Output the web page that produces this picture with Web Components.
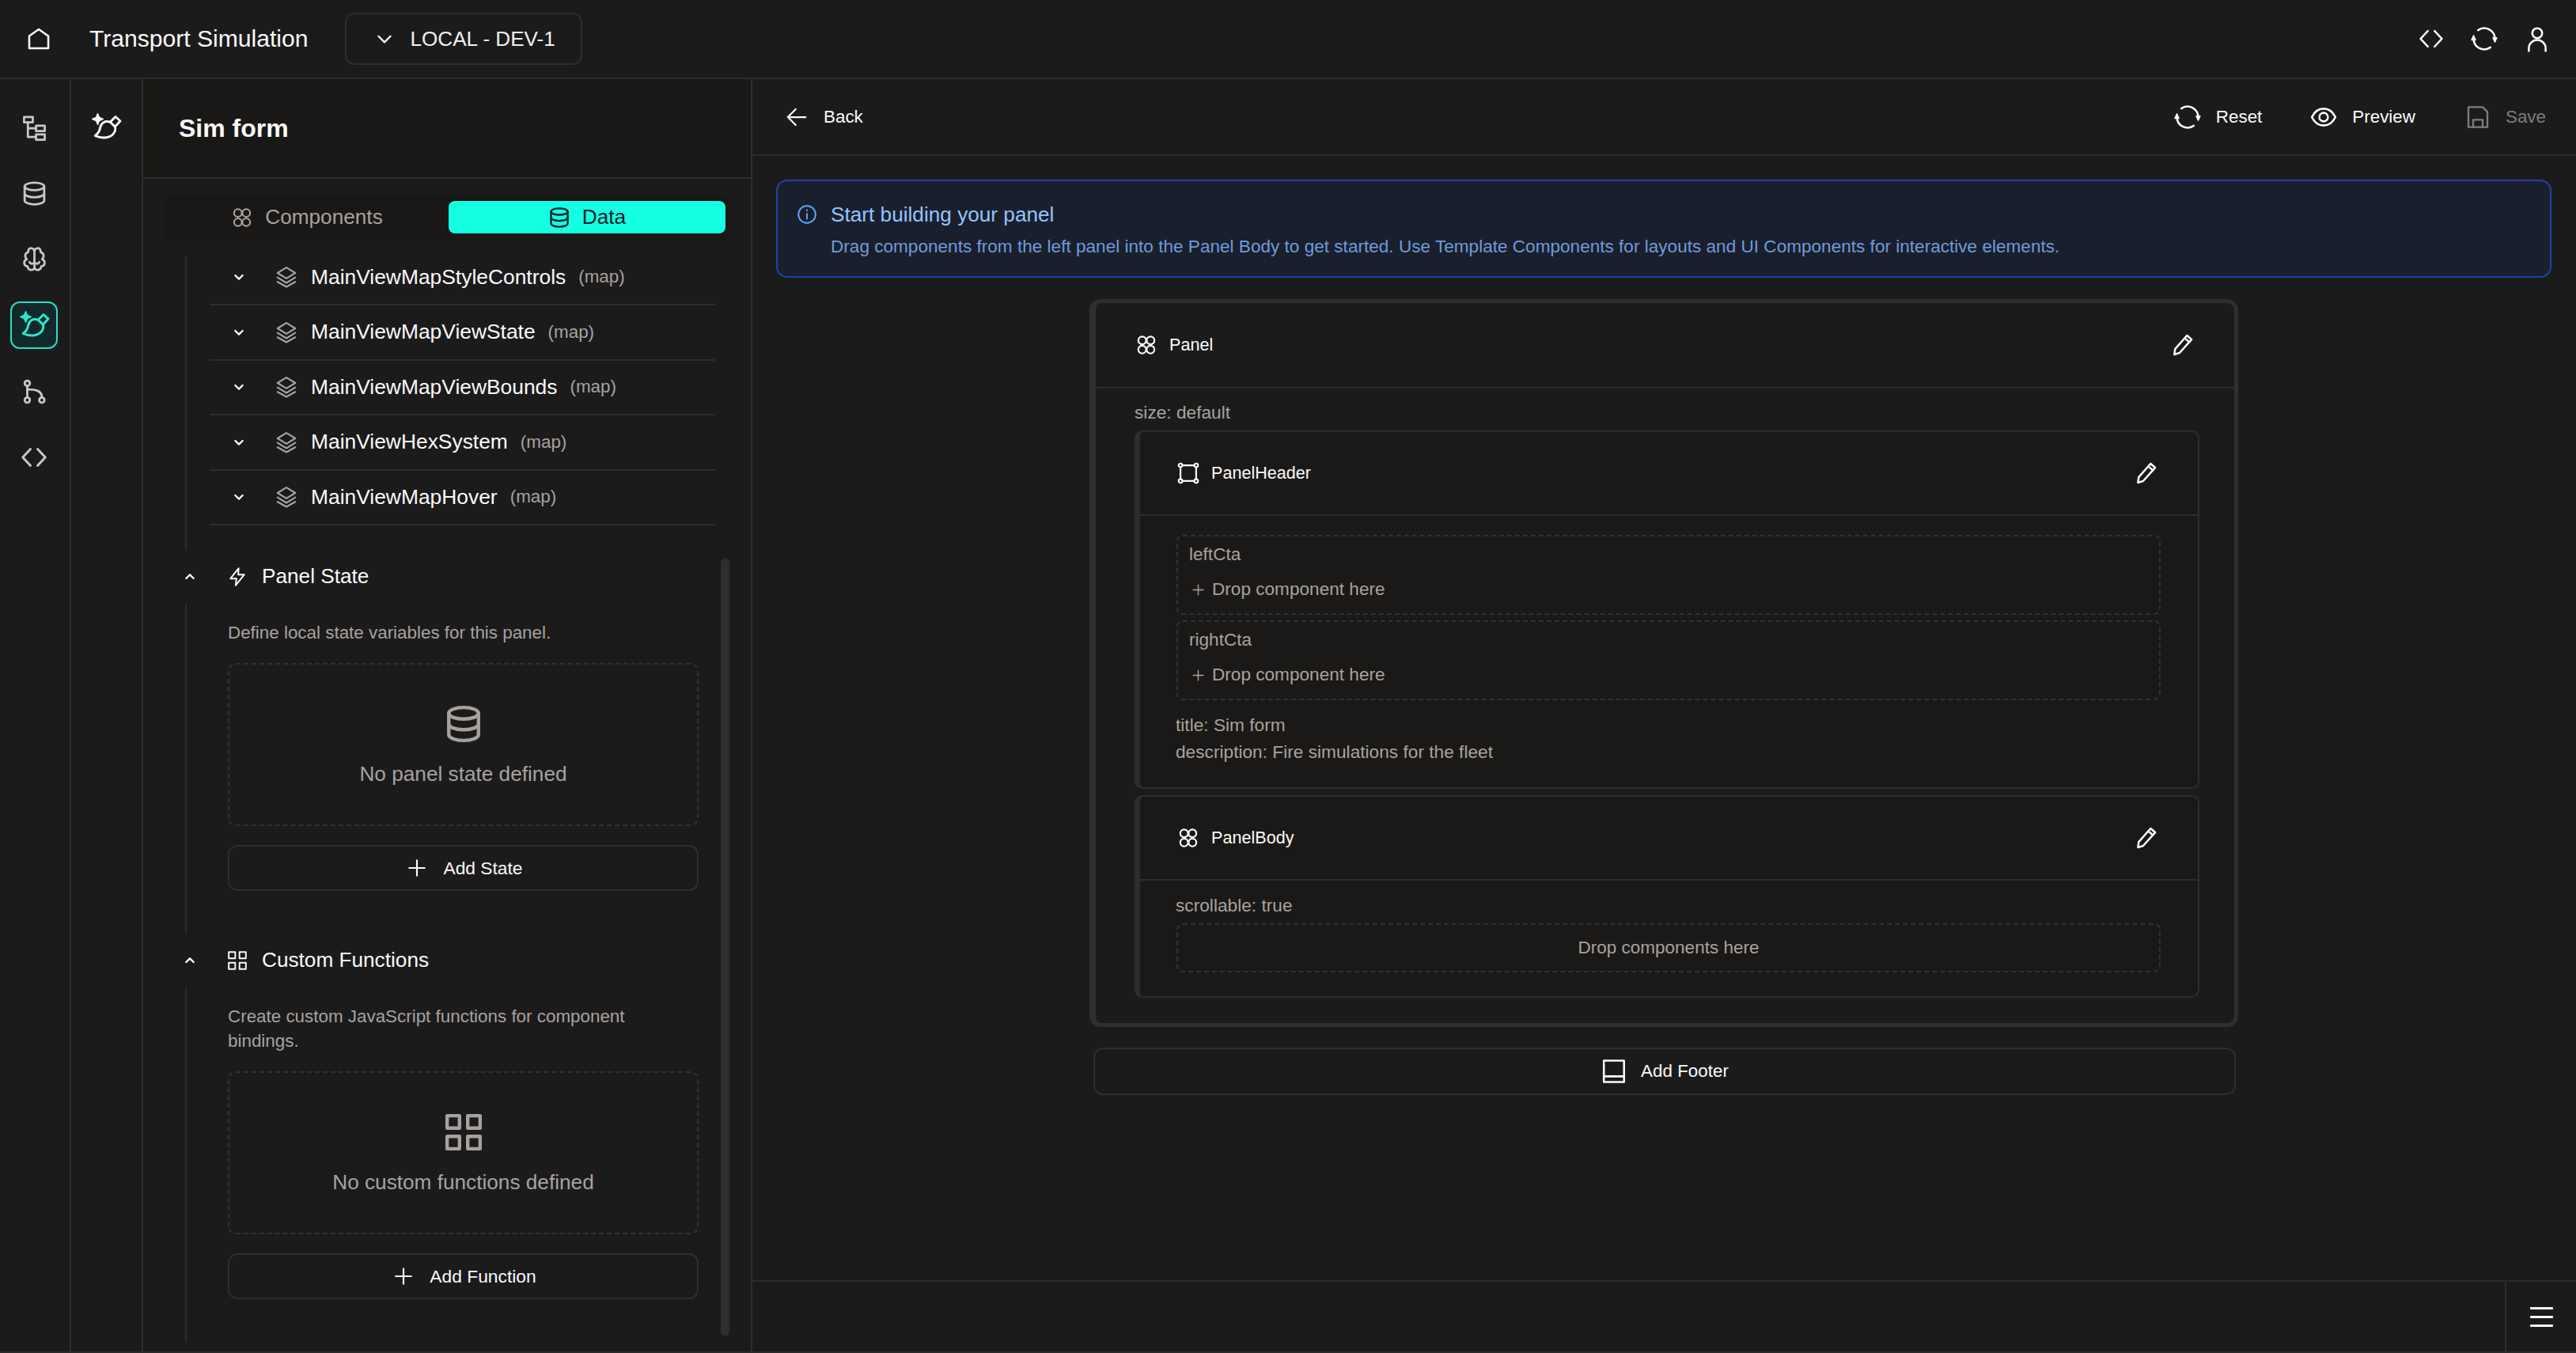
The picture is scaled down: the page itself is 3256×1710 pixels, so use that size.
<!DOCTYPE html>
<html lang="en">
<head>
<meta charset="utf-8">
<title>Transport Simulation</title>
<style>
  html, body { margin: 0; height: 100%; background: #1c1b1c; overflow: hidden; }
  body { font-family: "Liberation Sans", Arial, sans-serif; color: #fafafa; }
</style>
</head>
<body>
<app-shell>
  <nav-rail slot="rail"></nav-rail>
  <sub-rail slot="subrail"></sub-rail>

  <side-panel slot="panel" heading="Sim form">
    <tree-list>
      <tree-row name="MainViewMapStyleControls" kind="(map)"></tree-row>
      <tree-row name="MainViewMapViewState" kind="(map)"></tree-row>
      <tree-row name="MainViewMapViewBounds" kind="(map)"></tree-row>
      <tree-row name="MainViewHexSystem" kind="(map)"></tree-row>
      <tree-row name="MainViewMapHover" kind="(map)"></tree-row>
    </tree-list>
    <data-section label="Panel State" icon="bolt"
      desc="Define local state variables for this panel."
      empty="No panel state defined" empty-icon="db" action="Add State"></data-section>
    <data-section label="Custom Functions" icon="grid"
      desc="Create custom JavaScript functions for component bindings."
      empty="No custom functions defined" empty-icon="grid" action="Add Function"></data-section>
  </side-panel>

  <builder-view slot="main">
    <comp-card label="Panel" icon="circles" level="outer">
      <prop-line slot="props">size: default</prop-line>
      <comp-card label="PanelHeader" icon="corners" level="inner">
        <drop-slot label="leftCta"></drop-slot>
        <drop-slot label="rightCta"></drop-slot>
        <prop-line class="first">title: Sim form</prop-line>
        <prop-line>description: Fire simulations for the fleet</prop-line>
      </comp-card>
      <comp-card label="PanelBody" icon="circles" level="inner">
        <prop-line class="top">scrollable: true</prop-line>
        <drop-area>Drop components here</drop-area>
      </comp-card>
    </comp-card>
  </builder-view>
</app-shell>

<script>
const ICONS = {
  home: '<path d="M3.500 20.500V9.500L12 3.500l8.500 6v11z"/>',
  chevronDown: '<path d="M5 9l7 7 7-7"/>',
  chevronUp: '<path d="M5 15l7-7 7 7"/>',
  code: '<path d="M9 5l-6.500 7L9 19"/><path d="M15 5l6.500 7L15 19"/>',
  sync: '<path d="M6.500 4.300A9.500 9.500 0 0 1 21.500 12"/><path d="M17.500 19.700A9.500 9.500 0 0 1 2.500 12"/><path d="M19.700 11h3.600L21.500 15z" fill="currentColor" stroke-width="1"/><path d="M.7 13h3.600L2.500 9z" fill="currentColor" stroke-width="1"/>',
  user: '<circle cx="12" cy="7" r="4.400"/><path d="M4.500 23v-2.500a7.500 7.500 0 0 1 15 0V23"/>',
  tree: '<rect x="2.500" y="2" width="8" height="5"/><rect x="13.500" y="10" width="8" height="5"/><rect x="13.500" y="18" width="8" height="5"/><path d="M6 7v13.500h7.500M6 12.500h7.500"/>',
  db: '<ellipse cx="12" cy="5.500" rx="9" ry="3.500"/><path d="M3 5.500v13c0 1.900 4 3.500 9 3.500s9-1.600 9-3.500v-13"/><path d="M3 12c0 1.900 4 3.500 9 3.500s9-1.600 9-3.500"/>',
  brain: '<path d="M12 4.500C11.500 1.500 7.300 1 6.400 4c-.2.500-.2 1-.1 1.500C3.300 6.200 2.600 9.800 5 12 1.700 13.300 1.800 18.200 5.800 18.700 6 22.300 10.500 23.200 12 20c1.500 3.200 6 2.300 6.200-1.300 4-.5 4.100-5.400.8-6.700 2.400-2.200 1.700-5.800-1.300-6.500.1-.5.1-1-.1-1.500C16.700 1 12.500 1.500 12 4.500z"/><path d="M12 4.500V20"/><path d="M12 15c-1.500 1.800-3.500 1.500-4.500-.3"/><path d="M12 15c1.500 1.800 3.500 1.500 4.500-.3"/>',
  planet: '<path d="M5 .5l1.300 3.200L9.500 5 6.300 6.300 5 9.500 3.700 6.300.5 5l3.200-1.300z" fill="currentColor" stroke-width="1"/><path d="M15.500 7.500L20 3l4 3.700-4.400 4.700"/><path d="M15.500 7.500l4.100 3.900"/><path d="M15.500 7.500C11 6 7.800 8.300 7 12.500c-.4 2.800-2 5-4.200 6.500 4 2 12 3 15.500-1.700 1.800-2.300 1.800-4 1.300-5.900"/>',
  circles: '<circle cx="7.500" cy="7" r="4.200"/><circle cx="16.500" cy="7" r="4.200"/><circle cx="7.500" cy="17" r="4.200"/><circle cx="16.500" cy="17" r="4.200"/>',
  layers: '<path d="M12 2.500L21 8l-9 5.500L3 8z"/><path d="M3 12.500l9 5.500 9-5.500"/><path d="M3 17l9 5 9-5"/>',
  bolt: '<path d="M13.500 2L4 14h7l-1 8 10-12.500h-7z"/>',
  grid: '<rect x="2" y="2" width="7.500" height="7.500"/><rect x="14.500" y="2" width="7.500" height="7.500"/><rect x="2" y="14.500" width="7.500" height="7.500"/><rect x="14.500" y="14.500" width="7.500" height="7.500"/>',
  plus: '<path d="M12 3v18M3 12h18"/>',
  arrowLeft: '<path d="M21 12H4"/><path d="M11 4l-8 8 8 8"/>',
  eye: '<path d="M1.500 12C4 6.800 7.600 4.500 12 4.500s8 2.300 10.500 7.500C20 17.200 16.400 19.500 12 19.500S4 17.200 1.500 12z"/><circle cx="12" cy="12" r="3.800"/>',
  save: '<path d="M3 2.500h13.500L21 7v14.500H3z"/><path d="M7.500 21.500v-7h9v7"/>',
  info: '<circle cx="12" cy="12" r="10"/><path d="M12 11v6"/><path d="M12 7v.5"/>',
  corners: '<path d="M5.500 3.500h13M20.500 5.500v13M18.500 20.500h-13M3.500 18.500v-13"/><circle cx="3.500" cy="3.500" r="2"/><circle cx="20.500" cy="3.500" r="2"/><circle cx="3.500" cy="20.500" r="2"/><circle cx="20.500" cy="20.500" r="2"/>',
  pencil: '<path d="M4 21l.7-5.200L16 3l4.300 3.800L8.900 19.500z"/><path d="M13.800 5.500l4.300 3.800"/>',
  footer: '<rect x="3" y="2.500" width="18" height="19"/><path d="M3 16.500h18"/>'
};

class UiIcon extends HTMLElement {
  connectedCallback() {
    const size = this.getAttribute('size') || 32;
    const stroke = this.getAttribute('stroke') || 1.8;
    this.attachShadow({ mode: 'open' });
    this.shadowRoot.innerHTML = `
      <style>
        :host { display: inline-flex; flex: none; width: ${size}px; height: ${size}px; }
        svg { width: 100%; height: 100%; overflow: visible; fill: none; stroke: currentColor; stroke-width: ${stroke}; stroke-linecap: round; stroke-linejoin: round; }
      </style>
      <svg viewBox="0 0 24 24">${ICONS[this.getAttribute('name')] || ''}</svg>`;
  }
}
customElements.define('ui-icon', UiIcon);

class AppShell extends HTMLElement {
  constructor() {
    super();
    this.attachShadow({ mode: 'open' });
    this.shadowRoot.innerHTML = `
      <style>
        :host { display: flex; flex-direction: column; width: 100vw; height: 100vh; box-sizing: border-box; border-bottom: 2px solid #2b2b2b; background: #1c1b1c; overflow: hidden; }
        header { flex: none; height: 100px; box-sizing: border-box; border-bottom: 2px solid #2d2d2d; display: flex; align-items: center; padding: 0 32px; }
        .title { margin-left: 47px; font-size: 30.100px; }
        .env { margin-left: 46px; width: 300px; height: 66px; box-sizing: border-box; border: 2px solid #2f2e2e; border-radius: 12px; display: flex; align-items: center; gap: 20px; padding-left: 35px; font-size: 26.100px; color: #f0f0f0; }
        .right { margin-left: auto; display: flex; gap: 33px; }
        .body { flex: 1; min-height: 0; display: flex; }
      </style>
      <header>
        <ui-icon name="home" size="34" stroke="1.800"></ui-icon>
        <span class="title">Transport Simulation</span>
        <div class="env"><ui-icon name="chevronDown" size="26" stroke="2.200"></ui-icon>LOCAL - DEV-1</div>
        <div class="right">
          <ui-icon name="code" size="34"></ui-icon>
          <ui-icon name="sync" size="34"></ui-icon>
          <ui-icon name="user" size="34"></ui-icon>
        </div>
      </header>
      <div class="body">
        <slot name="rail"></slot>
        <slot name="subrail"></slot>
        <slot name="panel"></slot>
        <slot name="main"></slot>
      </div>`;
  }
}
customElements.define('app-shell', AppShell);

class NavRail extends HTMLElement {
  constructor() {
    super();
    this.attachShadow({ mode: 'open' });
    const items = ['tree', 'db', 'brain', 'planet', 'branch', 'code'];
    this.shadowRoot.innerHTML = `
      <style>
        :host { display: flex; flex-direction: column; flex: none; align-items: center; gap: 23.400px; width: 90px; box-sizing: border-box; padding: 31px 2px 0 0; border-right: 2px solid #2d2d2d; color: #c9c7c5; }
        .item { width: 60px; height: 60px; box-sizing: border-box; display: flex; align-items: center; justify-content: center; border-radius: 12px; }
        .on { border: 2px solid #2bdcc6; background: #13282a; color: #2be6ce; }
        svg { width: 34px; height: 34px; fill: none; stroke: currentColor; stroke-width: 2; stroke-linecap: round; stroke-linejoin: round; }
      </style>
      ${items.map(n => n === 'branch'
        ? `<div class="item"><svg viewBox="0 0 24 24"><circle cx="6" cy="4.500" r="2.300"/><circle cx="6" cy="19.500" r="2.300"/><circle cx="19" cy="19.500" r="2.300"/><path d="M6 7v10"/><path d="M6 10c6 0 13 .5 13 7"/></svg></div>`
        : `<div class="item ${n === 'planet' ? 'on' : ''}"><ui-icon name="${n}" size="${n === 'planet' ? 36 : n === 'code' ? 36 : 33}" stroke="2"></ui-icon></div>`).join('')}`;
  }
}
customElements.define('nav-rail', NavRail);

class SubRail extends HTMLElement {
  constructor() {
    super();
    this.attachShadow({ mode: 'open' });
    this.shadowRoot.innerHTML = `
      <style>
        :host { display: flex; flex: none; justify-content: center; width: 91px; height: 100%; box-sizing: border-box; padding: 43px 2px 0 0; border-right: 2px solid #2d2d2d; }
      </style>
      <ui-icon name="planet" size="36" stroke="1.900"></ui-icon>`;
  }
}
customElements.define('sub-rail', SubRail);

class SidePanel extends HTMLElement {
  connectedCallback() {
    this.attachShadow({ mode: 'open' });
    this.shadowRoot.innerHTML = `
      <style>
        :host { display: block; position: relative; flex: none; width: 770px; height: 100%; box-sizing: border-box; border-right: 2px solid #2d2d2d; overflow: hidden; }
        .head { height: 126px; box-sizing: border-box; border-bottom: 2px solid #2d2d2d; background: #1a1816; display: flex; align-items: center; padding-left: 45px; font-size: 32px; font-weight: 700; }
        .tabs { margin: 19px 0 11.500px 27px; width: 713px; height: 60px; box-sizing: border-box; padding: 9px 4px 10px 9px; border-radius: 10px; background: #1a1816; display: grid; grid-template-columns: 1fr 1fr; }
        .tab { display: flex; align-items: center; justify-content: center; gap: 15px; font-size: 26.200px; color: #a8a29e; border-radius: 8px; }
        .tab.first { padding-right: 8px; }
        .tab.on { background: #15ffe2; color: #10212a; }
        .bar { position: absolute; left: 730px; top: 606px; width: 11px; height: 982px; border-radius: 6px; background: #2d2f2f; }
      </style>
      <div class="head">${this.getAttribute('heading')}</div>
      <div class="tabs">
        <div class="tab first"><ui-icon name="circles" size="28"></ui-icon>Components</div>
        <div class="tab on"><ui-icon name="db" size="28" stroke="2"></ui-icon>Data</div>
      </div>
      <slot></slot>
      <div class="bar"></div>`;
  }
}
customElements.define('side-panel', SidePanel);

class TreeList extends HTMLElement {
  constructor() {
    super();
    this.attachShadow({ mode: 'open' });
    this.shadowRoot.innerHTML = `
      <style>
        :host { display: block; position: relative; padding-bottom: 30px; }
        :host::before { content: ""; position: absolute; left: 53px; top: 7px; bottom: 0; width: 2px; background: #2d2d2d; }
      </style>
      <slot></slot>`;
  }
}
customElements.define('tree-list', TreeList);

class TreeRow extends HTMLElement {
  connectedCallback() {
    this.attachShadow({ mode: 'open' });
    this.shadowRoot.innerHTML = `
      <style>
        :host { display: flex; align-items: center; height: 69.500px; box-sizing: border-box; margin: 0 45px 0 84px; padding-left: 29px; border-bottom: 2px solid #2d2d2d; }
        .name { margin-left: 16px; font-size: 26.400px; color: #fafafa; }
        .kind { margin-left: 16px; font-size: 22.400px; color: #a8a29e; }
        .layers { margin-left: 37px; color: #a8a29e; }
      </style>
      <ui-icon name="chevronDown" size="16" stroke="3.500"></ui-icon>
      <ui-icon class="layers" name="layers" size="30" stroke="1.700"></ui-icon>
      <span class="name">${this.getAttribute('name')}</span>
      <span class="kind">${this.getAttribute('kind')}</span>`;
  }
}
customElements.define('tree-row', TreeRow);

class DataSection extends HTMLElement {
  connectedCallback() {
    const a = n => this.getAttribute(n);
    this.attachShadow({ mode: 'open' });
    this.shadowRoot.innerHTML = `
      <style>
        :host { display: block; }
        .head { display: flex; align-items: center; height: 69px; padding-left: 51px; font-size: 26.200px; }
        .head .ico { margin-left: 39px; margin-right: 18px; }
        .body { margin-left: 53px; margin-right: 66px; padding: 21px 0 53px 52px; border-left: 2px solid #2d2d2d; }
        .desc { font-size: 22.400px; line-height: 31px; color: #a8a29e; margin-bottom: 23px; }
        .empty { height: 206px; box-sizing: border-box; border: 2px dashed #33312f; border-radius: 10px; display: flex; flex-direction: column; align-items: center; padding-top: 50px; color: #a8a29e; font-size: 26.200px; }
        .empty span { margin-top: 21px; line-height: 34px; }
        .btn { margin-top: 24px; height: 58px; box-sizing: border-box; border: 2px solid #2f2e2e; border-radius: 12px; padding-left: 4px; display: flex; align-items: center; justify-content: center; gap: 20px; font-size: 22.800px; color: #fafafa; }
      </style>
      <div class="head">
        <ui-icon name="chevronUp" size="16" stroke="3.500"></ui-icon>
        <ui-icon class="ico" name="${a('icon')}" size="26"></ui-icon>
        ${a('label')}
      </div>
      <div class="body">
        <div class="desc">${a('desc')}</div>
        <div class="empty"><ui-icon name="${a('empty-icon')}" size="50" stroke="2.100"></ui-icon><span>${a('empty')}</span></div>
        <div class="btn"><ui-icon name="plus" size="26" stroke="2"></ui-icon>${a('action')}</div>
      </div>`;
  }
}
customElements.define('data-section', DataSection);

class BuilderView extends HTMLElement {
  constructor() {
    super();
    this.attachShadow({ mode: 'open' });
    this.shadowRoot.innerHTML = `
      <style>
        :host { display: flex; flex-direction: column; flex: 1; min-width: 0; height: 100%; font-size: 22.400px; }
        .tools { flex: none; height: 97px; box-sizing: border-box; border-bottom: 2px solid #2d2d2d; display: flex; align-items: center; padding: 0 38px 0 41px; }
        .tool { display: flex; align-items: center; gap: 19px; }
        .spacer { flex: 1; }
        .tools .right { display: flex; gap: 63px; }
        .tools .reset { margin-right: -2px; }
        .off { color: #7c7c7c; }
        .canvas { flex: 1; min-height: 0; padding: 30px 31px 0 30px; overflow: hidden; }
        .info { height: 124px; box-sizing: border-box; border: 2px solid #1e40af; border-radius: 14px; background: #1a1f2e; display: flex; padding: 24px 0 0 24px; gap: 17px; }
        .info ui-icon { color: #60a5fa; margin-top: 5px; }
        .info .t { font-size: 26.200px; line-height: 36px; color: #93c5fd; }
        .info .d { margin-top: 5px; line-height: 36px; font-size: 22.580px; color: #6f9bd8; }
        .stage { width: 1452px; margin: 27px auto 0; }
        .footer-btn { margin: 26px 3px 0 5px; height: 60px; box-sizing: border-box; border: 2px solid #2f2e2e; border-radius: 12px; display: flex; align-items: center; justify-content: center; gap: 17px; }
        .bottom { flex: none; height: 90px; box-sizing: border-box; border-top: 2px solid #2d2d2d; display: flex; justify-content: flex-end; }
        .menu { width: 90px; box-sizing: border-box; border-left: 2px solid #2d2d2d; display: flex; flex-direction: column; justify-content: center; align-items: center; gap: 8px; }
        .menu i { display: block; width: 29px; height: 3px; background: #fafafa; border-radius: 1px; }
      </style>
      <div class="tools">
        <div class="tool"><ui-icon name="arrowLeft" size="30"></ui-icon>Back</div>
        <div class="spacer"></div>
        <div class="right">
          <div class="tool reset"><ui-icon name="sync" size="34"></ui-icon>Reset</div>
          <div class="tool"><ui-icon name="eye" size="34"></ui-icon>Preview</div>
          <div class="tool off"><ui-icon name="save" size="32"></ui-icon>Save</div>
        </div>
      </div>
      <div class="canvas">
        <div class="info">
          <ui-icon name="info" size="26"></ui-icon>
          <div>
            <div class="t">Start building your panel</div>
            <div class="d">Drag components from the left panel into the Panel Body to get started. Use Template Components for layouts and UI Components for interactive elements.</div>
          </div>
        </div>
        <div class="stage">
          <slot></slot>
          <div class="footer-btn"><ui-icon name="footer" size="34"></ui-icon>Add Footer</div>
        </div>
      </div>
      <div class="bottom"><div class="menu"><i></i><i></i><i></i></div></div>`;
  }
}
customElements.define('builder-view', BuilderView);

class CompCard extends HTMLElement {
  connectedCallback() {
    const outer = this.getAttribute('level') === 'outer';
    this.attachShadow({ mode: 'open' });
    this.shadowRoot.innerHTML = `
      <style>
        :host { display: block; box-sizing: border-box; font-size: 21.600px; }
        :host([level=outer]) { border: 5px solid #2e2f2f; border-left-width: 8px; border-radius: 14px; background: #1c1b1c; }
        :host([level=inner]) { border: 2px solid #2e2d2c; border-left-width: 7px; border-radius: 10px; background: #1b1917; margin-bottom: 8px; }
        :host([level=inner]:last-child) { margin-bottom: 0; }
        .head { display: flex; align-items: center; box-sizing: border-box; height: ${outer ? 108 : 106}px; border-bottom: 2px solid #2d2d2d; padding: 0 ${outer ? 49 : 49}px 0 ${outer ? 50 : 47}px; }
        .head span { margin-left: 15px; color: #fafafa; }
        .head .edit { margin-left: auto; }
        .body { padding: ${outer ? '0 44px 32px 49px' : '0 45px 28px 45px'}; }
      </style>
      <div class="head">
        <ui-icon name="${this.getAttribute('icon')}" size="28" stroke="1.900"></ui-icon>
        <span>${this.getAttribute('label')}</span>
        <ui-icon class="edit" name="pencil" size="32" stroke="1.900"></ui-icon>
      </div>
      <div class="body">
        <slot name="props"></slot>
        <slot></slot>
      </div>`;
  }
}
customElements.define('comp-card', CompCard);

class PropLine extends HTMLElement {
  constructor() {
    super();
    this.attachShadow({ mode: 'open' });
    this.shadowRoot.innerHTML = `
      <style>
        :host { display: block; color: #a8a29e; line-height: 34px; font-size: 22.700px; }
        :host([slot=props]) { padding: 15px 0 8px; line-height: 30px; }
        :host(.first) { margin-top: 14px; }
        :host(.top) { padding-top: 16px; line-height: 30px; margin-bottom: 8px; }
      </style>
      <slot></slot>`;
  }
}
customElements.define('prop-line', PropLine);

class DropSlot extends HTMLElement {
  connectedCallback() {
    this.attachShadow({ mode: 'open' });
    this.shadowRoot.innerHTML = `
      <style>
        :host { display: block; height: 101px; box-sizing: border-box; margin: 0 2px 7px 1px; padding: 7px 14px; border: 2px dashed #33312f; border-radius: 8px; color: #a8a29e; font-size: 22.600px; }
        :host(:first-of-type) { margin-top: 24px; }
        .l { line-height: 32px; }
        .d { display: flex; align-items: center; gap: 9px; margin-top: 12px; padding-left: 3px; line-height: 32px; }
      </style>
      <div class="l">${this.getAttribute('label')}</div>
      <div class="d"><ui-icon name="plus" size="17" stroke="2"></ui-icon>Drop component here</div>`;
  }
}
customElements.define('drop-slot', DropSlot);

class DropArea extends HTMLElement {
  constructor() {
    super();
    this.attachShadow({ mode: 'open' });
    this.shadowRoot.innerHTML = `
      <style>
        :host { display: flex; align-items: center; justify-content: center; height: 62px; box-sizing: border-box; margin: 0 2px 2px 1px; border: 2px dashed #33312f; border-radius: 8px; color: #a8a29e; font-size: 22.500px; }
      </style>
      <slot></slot>`;
  }
}
customElements.define('drop-area', DropArea);
</script>
</body>
</html>
